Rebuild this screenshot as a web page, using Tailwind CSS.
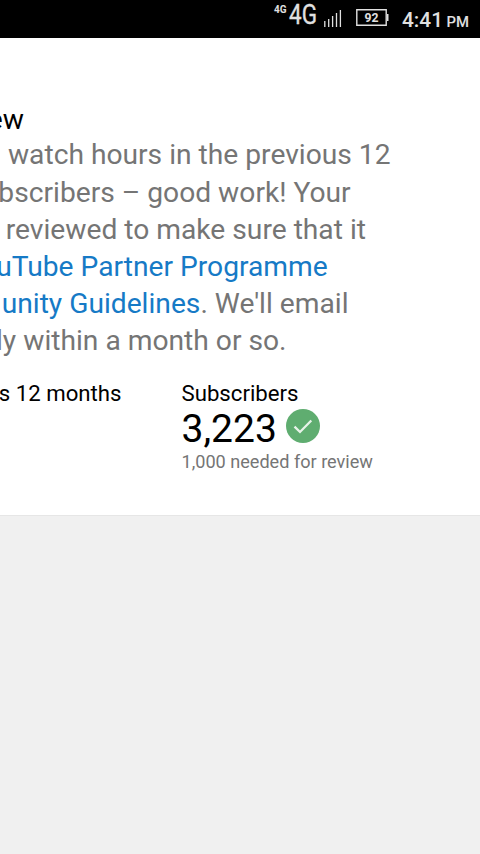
<!DOCTYPE html>
<html lang="en-GB">
<head>
<meta charset="utf-8">
<meta name="viewport" content="width=device-width, initial-scale=1">
<title>Monetisation status</title>
<script src="https://cdn.jsdelivr.net/npm/@tailwindcss/browser@4"></script>
</head>
<body class="h-[854px] w-[480px] overflow-hidden bg-[#f0f0f0] font-[Roboto,sans-serif]">
<header class="flex h-[38px] items-start bg-black pl-[274px] text-[#e0e0e0]">
  <svg class="mt-[4px] mr-[2px] block overflow-visible" width="13" height="12"><text x="0" y="9" font-size="11" font-weight="700" fill="currentColor" textLength="12.5" lengthAdjust="spacingAndGlyphs">4G</text></svg>
  <svg class="mt-[4px] block overflow-visible" width="28" height="24"><text x="0" y="20" font-size="27" fill="currentColor" stroke="currentColor" stroke-width=".3" textLength="28" lengthAdjust="spacingAndGlyphs">4G</text></svg>
  <svg class="mt-[9px] ml-[7px] block" width="18" height="18" stroke="currentColor" stroke-width="1.3"><path d="M.8 12v6M4.7 10v8M8.6 7v11M12.5 4v14M16.4 1v17"/></svg>
  <svg class="mt-[9px] ml-[14px] block overflow-visible" width="33" height="18"><path d="M.8.8H30.2V16.2H.8z" fill="none" stroke="currentColor" stroke-width="1.4"/><path d="M31 5h1.5v7H31z" fill="currentColor"/><text x="8.5" y="13" font-size="12.5" font-weight="700" fill="currentColor" textLength="14" lengthAdjust="spacingAndGlyphs">92</text></svg>
  <svg class="mt-[6px] ml-[13px] block overflow-visible" width="67" height="24" fill="currentColor"><text x="0" y="21" font-size="21" font-weight="500" textLength="41" lengthAdjust="spacingAndGlyphs">4:41</text><text x="44.5" y="21" font-size="15" font-weight="500" textLength="22.5" lengthAdjust="spacingAndGlyphs">PM</text></svg>
</header>
<main class="h-[478px] overflow-hidden border-b border-[#e6e6e6] bg-white pt-[62px]">
  <h1 class="flex h-[36.4px] w-[24px] justify-end text-[28.2px] leading-[40px] whitespace-nowrap text-black">ew</h1>
  <div class="text-[28.2px] leading-[37.2px] whitespace-nowrap text-[#757575]">
    <p class="flex w-[390.5px] justify-end">watch hours in the previous 12</p>
    <p class="flex w-[350.7px] justify-end">bscribers – good work! Your</p>
    <p class="flex w-[366px] justify-end">reviewed to make sure that it</p>
    <p class="flex w-[327.7px] justify-end text-[#167ac6]">uTube Partner Programme</p>
    <p class="flex w-[348.5px] justify-end"><span class="text-[#167ac6]">unity Guidelines</span><span class="whitespace-pre">. We'll email</span></p>
    <p class="flex w-[286.5px] justify-end">ly within a month or so.</p>
  </div>
  <section class="mt-[20.2px] flex whitespace-nowrap text-black">
    <div class="flex w-[121.5px] justify-end text-[22.2px] leading-[26px]">s 12 months</div>
    <div class="ml-[60px]">
      <div class="text-[22.2px] leading-[26px]">Subscribers</div>
      <div class="flex h-[44px] items-center">
        <span class="mt-[2px] w-[104.7px] text-[39px] leading-[44px]">3,223</span>
        <svg class="-mt-[4px] block" width="34" height="34" viewBox="0 0 34 34"><circle cx="17" cy="17" r="17" fill="#5fad70"/><path d="M8.5 17.7 14 23 25.3 11.5" fill="none" stroke="#e8f3e9" stroke-width="2.3"/></svg>
      </div>
      <div class="text-[18.1px] leading-[24px] text-[#757575]">1,000 needed for review</div>
    </div>
  </section>
</main>
</body>
</html>
